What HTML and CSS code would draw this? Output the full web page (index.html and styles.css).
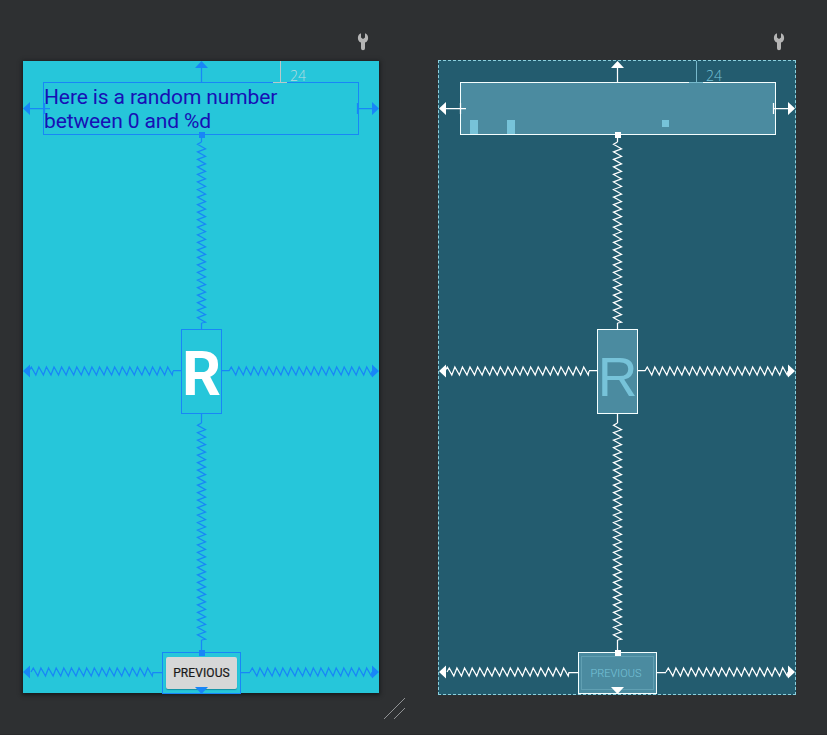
FILE: index.html
```html
<!DOCTYPE html>
<html lang="en">
<head>
<meta charset="utf-8">
<title>Layout Editor</title>
<link rel="stylesheet" href="styles.css">
</head>
<body>
<main class="surface">
  <section class="view design">
    <header class="tools"><svg class="wrench" width="12" height="20" viewBox="0 0 12 20"><path d="M4 1.2A5.1 5.1 0 0 0 4 10.6V16.3a1.9 1.9 0 0 0 4 0V10.6A5.1 5.1 0 0 0 8 1.2V5.6L6 7 4 5.6Z"/></svg></header>
    <div class="screen">
      <div class="widget label">Here is a random number<br>between 0 and %d</div>
      <div class="widget number">R</div>
      <div class="widget button"><span class="face">PREVIOUS</span></div>
      <svg class="wires" width="358" height="635"></svg>
      <span class="margin">24</span>
    </div>
  </section>
  <section class="view blueprint">
    <header class="tools"><svg class="wrench" width="12" height="20" viewBox="0 0 12 20"><path d="M4 1.2A5.1 5.1 0 0 0 4 10.6V16.3a1.9 1.9 0 0 0 4 0V10.6A5.1 5.1 0 0 0 8 1.2V5.6L6 7 4 5.6Z"/></svg></header>
    <div class="screen">
      <div class="widget label"><i class="block one"></i><i class="block two"></i><i class="block three"></i></div>
      <div class="widget number">R</div>
      <div class="widget button"><span class="face">PREVIOUS</span></div>
      <svg class="wires" width="358" height="635"></svg>
      <span class="margin">24</span>
    </div>
  </section>
  <svg class="grip" width="22" height="22"><path d="M0 21L21 0M10 21L21 10"/></svg>
</main>
<script src="wires.js"></script>
</body>
</html>
```

FILE: styles.css
```css
* { box-sizing: border-box; }
body { margin: 0; background: #2e3032; font-family: Roboto, sans-serif; }
.surface { position: relative; display: flex; gap: 58px; width: 827px; height: 735px; padding: 32px 0 0 22px; overflow: hidden; border-bottom: 1px solid #292a2c; }
.view { width: 358px; }
.tools { display: flex; justify-content: flex-end; height: 28px; padding-right: 11px; }
.wrench { fill: #b5b5b5; }
.screen { position: relative; width: 358px; height: 635px; }
.design .screen { background: linear-gradient(#26c6da, #26c6da) 1px 1px / 356px 632px no-repeat; }
.design .screen::before { content: ""; position: absolute; left: 1px; top: 1px; width: 356px; height: 632px; box-shadow: 0 1px 4px 1px #17191b; z-index: -1; }
.blueprint .screen { background: #235c6f; outline: 1px dashed #8bd0de; outline-offset: -1px; }
.widget { position: absolute; border: 1px solid #1886f7; }
.label { left: 21px; top: 22px; width: 316px; height: 53px; font-size: 21px; line-height: 24px; letter-spacing: -0.12px; color: #1710b5; white-space: nowrap; padding-top: 2px; }
.number { left: 159px; top: 269px; width: 41px; height: 85px; color: #fff; font-weight: 700; font-size: 61px; line-height: 88px; display: flex; justify-content: center; }
.button { left: 140px; top: 592px; width: 79px; height: 42px; padding: 4px 3px; font-size: 12px; }
.face { display: flex; align-items: center; justify-content: center; height: 32px; border-radius: 2px; background: #d6d7d7; color: #191919; font-weight: 400; letter-spacing: 0.1px; -webkit-text-stroke: 0.2px #191919; box-shadow: 0 1px 1px #168fa0; }
.blueprint .widget { border-color: #f5ffff; background: #4b8ba0; }
.blueprint .label { left: 22px; }
.blueprint .number { color: #77c3d9; font: 400 55px/94px "Liberation Sans", sans-serif; }
.blueprint .face { margin: -1px 0 0 -1px; width: 73px; height: 34px; padding-right: 3px; background: none; border: 1px solid #609fb2; border-radius: 0; box-shadow: none; -webkit-text-stroke: 0; color: #77c3d9; font: 300 11px Roboto, sans-serif; letter-spacing: 0; }
.block { position: absolute; background: #77c3d9; }
.one { left: 9px; top: 37px; width: 8px; height: 14px; }
.two { left: 46px; top: 37px; width: 8px; height: 14px; }
.three { left: 201px; top: 37px; width: 7px; height: 7px; }
.wires { position: absolute; left: 0; top: 0; fill: none; stroke: #1886f7; stroke-width: 1.25; }
.blueprint .wires { stroke: #fff; }
.wires .solid { fill: #1886f7; stroke: none; }
.blueprint .wires .solid { fill: #fff; }
.wires .dimension { stroke: #b8c9cb; stroke-width: 1; }
.blueprint .wires .dimension { stroke: #77b9cc; }
.margin { position: absolute; left: 268px; top: 8px; font: 300 14px/16px "Open Sans", sans-serif; color: #b8dbe0; }
.blueprint .margin { color: #77c3d9; }
.grip { position: absolute; left: 384px; top: 698px; fill: none; stroke: #909294; }
```

FILE: wires.js
```js
// A spring runs from start to end along one axis, centred on the other.
function spring(start, end, centre, vertical) {
  const count = Math.round((end - start) / 7.5);
  const step = (end - start) / count;
  const point = (along, across) =>
    vertical ? `${centre + across} ${along}` : `${along} ${centre + across}`;
  let d = `M${point(start, 0)}`;
  for (let i = 0; i < count; i++) {
    const a = start + i * step;
    d += `L${point(a + step * 0.3, -4)}L${point(a + step * 0.9, 4)}`;
  }
  return d + `L${point(end, 0)}`;
}

const springs = [
  spring(82, 263, 179.5, true), spring(363, 580, 179.5, true),
  spring(7, 151, 311, false), spring(207, 350, 311, false),
  spring(9, 131, 612, false), spring(228, 350, 612, false)
].join("");

const lines = "M179.5 8V22M179.5 78V82M179.5 263V269M179.5 354V363M179.5 580V592" +
  "M8 48.5H28M22.5 43V54M335 48.5H350M335.5 43V54" +
  "M151 310.5H159M200 310.5H207M131 612.5H140M219 612.5H228";

const solids = "M179.5 1L186 8H173Z" +
  "M1 48.5L8 42V55ZM357 48.5L350 42V55Z" +
  "M1 311L8 304.5V317.5ZM357 311L350 304.5V317.5Z" +
  "M1 612L8 605.5V618.5ZM357 612L350 605.5V618.5Z" +
  "M173 627H186L179.5 634Z" +
  "M177 72H183V78H177ZM177 590H183V596H177Z";

document.querySelectorAll(".wires").forEach(svg => {
  svg.innerHTML = `<path d="${springs}"/><path d="${lines}"/>` +
    `<path class="solid" d="${solids}"/>` +
    `<path class="dimension" d="M258.5 1V22M251 22.5H265"/>`;
});
```
